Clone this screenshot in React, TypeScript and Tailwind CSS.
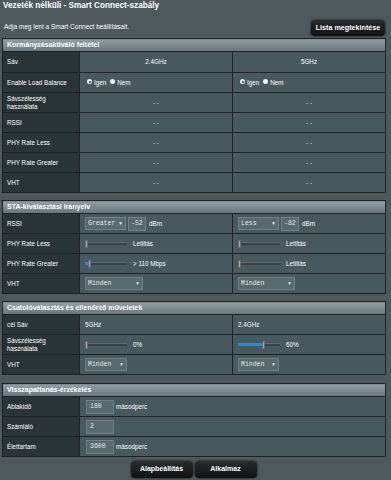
const th =
  "w-[77px] border border-[#222] bg-[#2a3539] pl-[4px] text-left align-middle font-normal text-[6.3px] leading-[8px] text-white";
const td = "border border-[#222] bg-[#475a5f] px-[5px] align-middle text-[6.3px] leading-[8px] text-white";

const Head = ({ title, span = 3 }: { title: string; span?: number }) => (
  <tr>
    <th
      colSpan={span}
      className="h-[13px] border border-[#222] bg-linear-to-b from-[#92a0a5] to-[#66757c] pl-[4px] text-left text-[7px] font-bold leading-[10px] text-white"
    >
      {title}
    </th>
  </tr>
);

const Radio = ({ on }: { on?: boolean }) => (
  <span className="mb-[2px] flex h-[5px] w-[5px] items-center justify-center rounded-full bg-[#f2f2f2]">
    {on && <span className="h-[2px] w-[2px] rounded-full bg-[#333]" />}
  </span>
);

const Radios = () => (
  <div className="flex items-center gap-[2px] pl-[2px]">
    <Radio on />
    <span className="mr-[2px]">Igen</span>
    <Radio />
    <span>Nem</span>
  </div>
);

const Select = ({ value, w }: { value: string; w: string }) => (
  <div
    className={`flex h-[13px] items-center justify-between border border-[#6f8287] bg-[#566a70] pl-[2px] pr-[3px] font-['Liberation_Mono',monospace] text-[6.5px] text-[#e6e6e6] ${w}`}
  >
    <span>{value}</span>
    <span className="text-[5px]">▼</span>
  </div>
);

const Input = ({ value, w }: { value: string; w: string }) => (
  <div
    className={`flex h-[14px] items-center border border-[#6f8287] bg-[#566a70] pl-[2px] font-['Liberation_Mono',monospace] text-[6.5px] text-[#e6e6e6] ${w}`}
  >
    {value}
  </div>
);

const Slider = ({ fill = 0, label }: { fill?: number; label: string }) => (
  <div className="flex items-center">
    <div className="relative flex h-[9px] w-[42px] items-center">
      <div className="h-[3px] w-full border-t border-[#5d6c70] bg-[#3a4447]" />
      {fill > 0 && (
        <div className="absolute left-0 h-[3px] bg-[#1d8ee6]" style={{ width: fill }} />
      )}
      <div
        className="absolute h-[8px] w-[3px] border border-[#6a6a6a] bg-[#a8a8a8]"
        style={{ left: fill }}
      />
    </div>
    <span className="ml-[6px]">{label}</span>
  </div>
);

const Dash = () => <span className="text-[#cfd6d8]">- -</span>;

export default function App() {
  return (
    <div className="h-[480px] w-[391px] overflow-hidden bg-[#4d595d] px-[2px] font-['Liberation_Sans',Arial,sans-serif] text-white">
      <div className="h-[18px] pl-[1px] text-[8.2px] font-bold leading-[12px]">
        Vezeték nélküli - Smart Connect-szabály
      </div>
      <div className="flex h-[20px] items-start justify-between pr-[4px]">
        <p className="pl-[2px] pt-[5px] text-[6.5px] leading-[8px]">
          Adja meg lent a Smart Connect beállításait.
        </p>
        <button className="mt-[2px] h-[16px] w-[74px] rounded-[4px] bg-linear-to-b from-[#2a2e30] to-[#101214] text-[7.2px] font-bold text-white shadow-[0_0_2px_#000]">
          Lista megtekintése
        </button>
      </div>

      <div className="flex w-[383px] flex-col gap-[7px]">
        <table className="w-full table-fixed border-collapse">
          <colgroup>
            <col className="w-[77px]" />
            <col className="w-[153px]" />
            <col className="w-[153px]" />
          </colgroup>
          <tbody>
            <Head title="Kormányzásaktiváló feltétel" />
            <tr className="h-[21px]">
              <th className={th}>Sáv</th>
              <td className={`${td} text-center`}>2.4GHz</td>
              <td className={`${td} text-center`}>5GHz</td>
            </tr>
            <tr className="h-[20px]">
              <th className={th}>Enable Load Balance</th>
              <td className={td}>
                <Radios />
              </td>
              <td className={td}>
                <Radios />
              </td>
            </tr>
            {[
              ["Sávszélesség", "használata"],
              ["RSSI"],
              ["PHY Rate Less"],
              ["PHY Rate Greater"],
              ["VHT"],
            ].map((l) => (
              <tr key={l[0]} className="h-[20px]">
                <th className={th}>
                  {l[0]}
                  {l[1] && <br />}
                  {l[1]}
                </th>
                <td className={`${td} text-center`}>
                  <Dash />
                </td>
                <td className={`${td} text-center`}>
                  <Dash />
                </td>
              </tr>
            ))}
          </tbody>
        </table>

        <table className="w-full table-fixed border-collapse">
          <colgroup>
            <col className="w-[77px]" />
            <col className="w-[153px]" />
            <col className="w-[153px]" />
          </colgroup>
          <tbody>
            <Head title="STA-kiválasztási irányelv" />
            <tr className="h-[20px]">
              <th className={th}>RSSI</th>
              <td className={td}>
                <div className="flex items-center">
                  <Select value="Greater" w="w-[41px]" />
                  <Input value="-52" w="ml-[2px] w-[18px] h-[13px]" />
                  <span className="ml-[3px]">dBm</span>
                </div>
              </td>
              <td className={td}>
                <div className="flex items-center">
                  <Select value="Less" w="w-[41px]" />
                  <Input value="-82" w="ml-[2px] w-[18px] h-[13px]" />
                  <span className="ml-[3px]">dBm</span>
                </div>
              </td>
            </tr>
            <tr className="h-[20px]">
              <th className={th}>PHY Rate Less</th>
              <td className={td}>
                <Slider label="Letiltás" />
              </td>
              <td className={td}>
                <Slider label="Letiltás" />
              </td>
            </tr>
            <tr className="h-[20px]">
              <th className={th}>PHY Rate Greater</th>
              <td className={td}>
                <Slider fill={3} label="> 110 Mbps" />
              </td>
              <td className={td}>
                <Slider label="Letiltás" />
              </td>
            </tr>
            <tr className="h-[20px]">
              <th className={th}>VHT</th>
              <td className={td}>
                <Select value="Minden" w="w-[58px]" />
              </td>
              <td className={td}>
                <Select value="Minden" w="w-[57px]" />
              </td>
            </tr>
          </tbody>
        </table>

        <table className="w-full table-fixed border-collapse">
          <colgroup>
            <col className="w-[77px]" />
            <col className="w-[153px]" />
            <col className="w-[153px]" />
          </colgroup>
          <tbody>
            <Head title="Csatolóválasztás és ellenőrző műveletek" />
            <tr className="h-[20px]">
              <th className={th}>cél Sáv</th>
              <td className={td}>5GHz</td>
              <td className={td}>2.4GHz</td>
            </tr>
            <tr className="h-[20px]">
              <th className={th}>
                Sávszélesség
                <br />
                használata
              </th>
              <td className={td}>
                <Slider label="0%" />
              </td>
              <td className={td}>
                <Slider fill={24} label="60%" />
              </td>
            </tr>
            <tr className="h-[20px]">
              <th className={th}>VHT</th>
              <td className={td}>
                <Select value="Minden" w="w-[42px]" />
              </td>
              <td className={td}>
                <Select value="Minden" w="w-[41px]" />
              </td>
            </tr>
          </tbody>
        </table>

        <table className="mt-[1px] w-full table-fixed border-collapse">
          <colgroup>
            <col className="w-[77px]" />
            <col className="w-[306px]" />
          </colgroup>
          <tbody>
            <Head title="Visszapattanás-érzékelés" span={2} />
            {[
              ["Ablakidő", "180", "másodperc"],
              ["Számláló", "2", ""],
              ["Élettartam", "3600", "másodperc"],
            ].map(([l, v, u]) => (
              <tr key={l} className="h-[20px]">
                <th className={th}>{l}</th>
                <td className={td}>
                  <div className="flex items-center">
                    <Input value={v} w="w-[28px] ml-[1px] pl-[3px]" />
                    {u && <span className="ml-[2px]">{u}</span>}
                  </div>
                </td>
              </tr>
            ))}
          </tbody>
        </table>
      </div>

      <div className="mt-[4px] flex w-[383px] justify-center gap-[2px]">
        <button className="h-[17px] w-[62px] rounded-[4px] bg-linear-to-b from-[#2a2e30] to-[#101214] text-[7px] font-bold text-white shadow-[0_0_2px_#000]">
          Alapbeállítás
        </button>
        <button className="h-[17px] w-[62px] rounded-[4px] bg-linear-to-b from-[#2a2e30] to-[#101214] text-[7px] font-bold text-white shadow-[0_0_2px_#000]">
          Alkalmaz
        </button>
      </div>
    </div>
  );
}
